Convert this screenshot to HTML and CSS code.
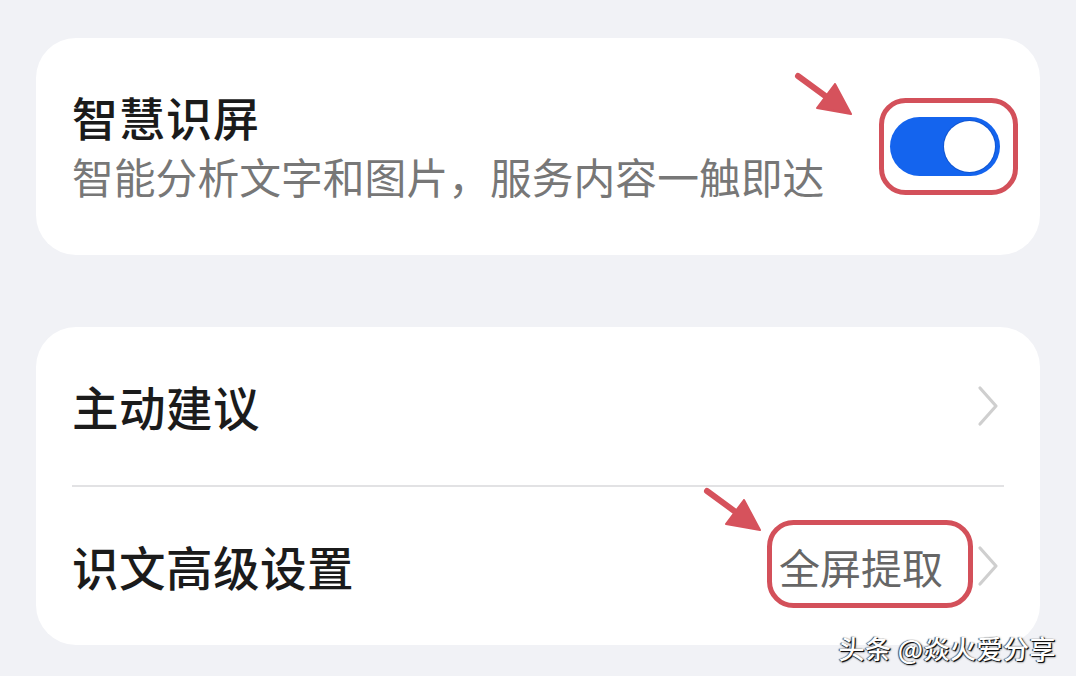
FILE: index.html
```html
<!DOCTYPE html>
<html lang="zh-CN">
<head>
<meta charset="utf-8">
<title>智慧识屏</title>
<link rel="stylesheet" href="styles.css">
</head>
<body>
<div class="page">
  <section class="card card-top">
    <div class="text">
      <h2 class="title">智慧识屏</h2>
      <p class="subtitle">智能分析文字和图片，服务内容一触即达</p>
    </div>
    <span class="switch" role="switch" aria-checked="true"><span class="knob"></span></span>
  </section>

  <section class="card card-list">
    <div class="row">
      <span class="row-title">主动建议</span>
      <svg class="chevron" viewBox="0 0 22 42" width="22" height="42"><path d="M3 3 L19 21 L3 39" fill="none" stroke="#cfcfcf" stroke-width="3.2" stroke-linecap="round" stroke-linejoin="round"/></svg>
    </div>
    <div class="divider"></div>
    <div class="row">
      <span class="row-title">识文高级设置</span>
      <span class="row-end">
        <span class="value">全屏提取</span>
        <svg class="chevron" viewBox="0 0 22 42" width="22" height="42"><path d="M3 3 L19 21 L3 39" fill="none" stroke="#cfcfcf" stroke-width="3.2" stroke-linecap="round" stroke-linejoin="round"/></svg>
      </span>
    </div>
  </section>

  <svg class="annotations" viewBox="0 0 1076 676" width="1076" height="676">
    <g fill="#d6525c" stroke="#d6525c">
      <line x1="798" y1="76" x2="828" y2="98" stroke-width="6" stroke-linecap="round"/>
      <polygon points="851,114 835,84 817,108" stroke-width="2" stroke-linejoin="round"/>
      <line x1="707" y1="491" x2="737" y2="513" stroke-width="6" stroke-linecap="round"/>
      <polygon points="760,530 744,500 726,524" stroke-width="2" stroke-linejoin="round"/>
    </g>
    <rect x="881.5" y="100.5" width="134" height="92" rx="24" fill="none" stroke="#d3505a" stroke-width="5"/>
    <rect x="769.5" y="522.5" width="201" height="83" rx="24" fill="none" stroke="#d3505a" stroke-width="5"/>
  </svg>

  <div class="watermark">头条 @焱火爱分享</div>
</div>
</body>
</html>
```

FILE: styles.css
```css
* { box-sizing: border-box; }
html, body {
  margin: 0;
  padding: 0;
  background: #f1f2f6;
}
body {
  font-family: "Noto Sans CJK SC", "Noto Sans", sans-serif;
  color: #1b1b1b;
}
.page {
  position: relative;
  width: 1076px;
  height: 676px;
  padding: 38px 36px 0 36px;
  display: flex;
  flex-direction: column;
  gap: 72px;
  overflow: hidden;
}
.card {
  background: #ffffff;
  border-radius: 40px;
}
.card-top {
  height: 217px;
  display: flex;
  align-items: center;
  justify-content: space-between;
  padding: 0 40px 0 36px;
}
.text {
  display: flex;
  flex-direction: column;
}
.title {
  margin: 0;
  font-size: 46px;
  font-weight: 500;
  line-height: 56px;
  color: #1b1b1b;
  letter-spacing: 1px;
}
.subtitle {
  margin: 2px 0 0 0;
  font-size: 41.8px;
  font-weight: 400;
  line-height: 60px;
  color: #777777;
}
.switch {
  position: relative;
  width: 110px;
  height: 59px;
  border-radius: 30px;
  background: #1464ee;
  display: flex;
  align-items: center;
  justify-content: flex-end;
  padding-right: 5px;
}
.knob {
  width: 51px;
  height: 51px;
  border-radius: 50%;
  background: #ffffff;
  box-shadow: 0 0 0 1px rgba(10, 60, 160, 0.35);
}
.card-list {
  height: 318px;
  display: flex;
  flex-direction: column;
}
.row {
  flex: 1;
  display: flex;
  align-items: center;
  justify-content: space-between;
  padding: 0 41px 0 36px;
}
.row-title {
  font-size: 46.5px;
  font-weight: 500;
  line-height: 56px;
  color: #1b1b1b;
  letter-spacing: 0.5px;
}
.row-end {
  display: flex;
  align-items: center;
  gap: 34px;
}
.value {
  font-size: 41px;
  font-weight: 400;
  line-height: 56px;
  color: #666666;
}
.chevron {
  display: block;
  width: 22px;
  height: 42px;
}
.divider {
  height: 2px;
  margin: 0 36px;
  background: #e2e2e4;
}
.annotations {
  position: absolute;
  left: 0;
  top: 0;
  pointer-events: none;
}
.watermark {
  position: absolute;
  right: 20px;
  bottom: 10px;
  font-size: 26px;
  font-weight: 500;
  line-height: 36px;
  color: #ffffff;
  text-shadow: 1px 1px 0 #111, 1px 1px 2px #222, -1px 0 1px #444;
  letter-spacing: 0.5px;
}
```
